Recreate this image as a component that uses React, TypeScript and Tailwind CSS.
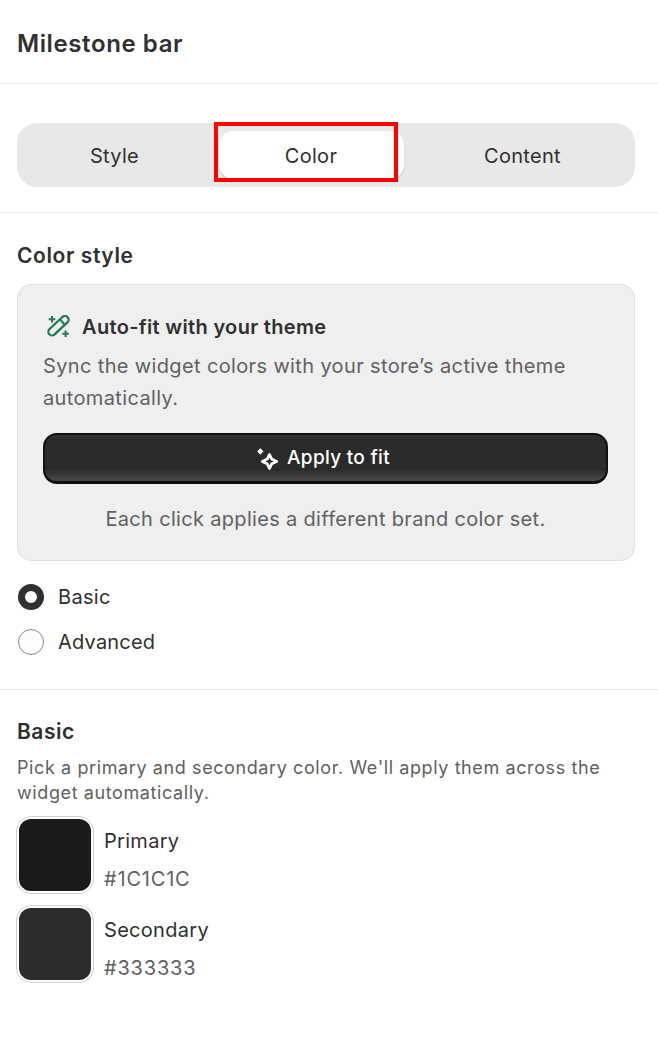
export default function App() {
  return (
    <div className="w-[658px] h-[1058px] bg-white text-[#303030] overflow-hidden font-['Inter',sans-serif]">
      <div className="h-[84px] border-b border-[#e6e6e6] px-[17px] pt-[27px]">
        <h1 className="text-[24px] leading-[34px] font-semibold tracking-[0.6px]">Milestone bar</h1>
      </div>

      <div className="h-[129px] border-b border-[#e6e6e6] pl-[17px] pt-[39px]">
        <div className="relative h-[64px] w-[618px] rounded-[20px] bg-[#e8e8e8] flex items-center text-[20px] tracking-[0.3px] pl-[7px]">
          <div className="w-[181px] text-center pt-[2px]">Style</div>
          <div className="ml-[14px] w-[185px] h-[48px] bg-white rounded-[14px] shadow-[0_1px_1px_#b5b5b5] flex items-center justify-center pr-[1px] pt-[2px]">Color</div>
          <div className="ml-[13px] w-[211px] text-center pt-[2px]">Content</div>
          <div className="absolute left-[197px] top-[-1px] w-[184px] h-[60px] border-4 border-[#ff0000]"></div>
        </div>
      </div>

      <div className="h-[477px] border-b border-[#e6e6e6] pl-[17px] pt-[28px]">
        <h2 className="text-[21px] leading-[30px] font-semibold tracking-[0.6px]">Color style</h2>
        <div className="mt-[13px] w-[618px] h-[277px] rounded-[14px] border border-[#e0e0e0] bg-[#efefef] pl-[25px] pr-[26px] pt-[28px]">
          <div className="flex items-center gap-[11px]">
            <svg width="24" height="24" viewBox="0 0 24 24" fill="none" stroke="#1f7a55" strokeWidth="2.3" className="ml-[4px]">
              <rect x="-1" y="7" width="25" height="7.4" rx="3.7" transform="rotate(-43 11.5 10.7)" />
              <path d="M13.5 5l4.5 5" strokeWidth="2" />
              <path d="M5 1v6.6M1.7 4.3h6.6M18.6 15.4v6.6M15.3 18.7h6.6" strokeWidth="2.1" />
            </svg>
            <div className="text-[20px] leading-[28px] font-semibold tracking-[0.33px]">Auto-fit with your theme</div>
          </div>
          <p className="mt-[9px] text-[20px] leading-[32px] text-[#616161] tracking-[0.36px]">Sync the widget colors with your store’s active theme automatically.</p>
          <button className="mt-[19px] w-full h-[51px] rounded-[14px] bg-[linear-gradient(#333_0%,#2a2a2a_10%,#2a2a2a_75%,#454545_95%)] border-[2px] border-[#111] border-b-[3px] flex items-center justify-center gap-[7px] pr-[5px] text-white text-[19px] tracking-[0.3px] font-medium">
            <svg width="24" height="24" viewBox="0 0 24 24" fill="none" stroke="white">
              <path d="M13.5 8.5l2.2 4.6 5 2.3-5 2.4-2.2 4.7-2.3-4.7-4.9-2.4 4.9-2.3z" strokeWidth="2.8" strokeLinejoin="round" />
              <path d="M4.3 2.6l2.6 2.8-2.6 2.8-2.6-2.8z" fill="white" strokeWidth="1" strokeLinejoin="round" />
            </svg>
            Apply to fit
          </button>
          <p className="mt-[19px] text-center text-[20px] leading-[32px] text-[#616161] tracking-[0.32px]">Each click applies a different brand color set.</p>
        </div>
        <div className="mt-[22px] flex items-center gap-[14px] h-[28px] pl-[1px]">
          <div className="w-[26px] h-[26px] rounded-full border-[7px] border-[#303030] bg-white"></div>
          <span className="text-[20px] tracking-[0.3px]">Basic</span>
        </div>
        <div className="mt-[17px] flex items-center gap-[14px] h-[28px] pl-[1px]">
          <div className="w-[26px] h-[26px] rounded-full border border-[#8a8a8a] bg-[#fdfdfd]"></div>
          <span className="text-[20px] tracking-[0.2px]">Advanced</span>
        </div>
      </div>

      <div className="pl-[17px] pt-[27px]">
        <h2 className="text-[21px] leading-[30px] font-semibold tracking-[0.5px]">Basic</h2>
        <p className="mt-[8px] w-[618px] text-[18px] leading-[25px] text-[#616161] tracking-[0.6px]">Pick a primary and secondary color. We'll apply them across the widget automatically.</p>
        <Swatch color="bg-[#1a1a1a]" label="Primary" value="#1C1C1C" className="mt-[12px]" />
        <Swatch color="bg-[#2c2c2c]" label="Secondary" value="#333333" className="mt-[13px]" />
      </div>
    </div>
  );
}

function Swatch({ color, label, value, className }: { color: string; label: string; value: string; className: string }) {
  return (
    <div className={`flex items-center gap-[11px] ${className}`}>
      <div className={`w-[76px] h-[76px] rounded-[14px] border-[2px] border-white outline-[1.5px] outline-[#cfcfcf] ${color}`}></div>
      <div className="pt-[10px]">
        <div className="text-[20px] leading-[28px] tracking-[0.3px]">{label}</div>
        <div className="mt-[10px] text-[20px] leading-[28px] text-[#616161] tracking-[0.8px]">{value}</div>
      </div>
    </div>
  );
}
